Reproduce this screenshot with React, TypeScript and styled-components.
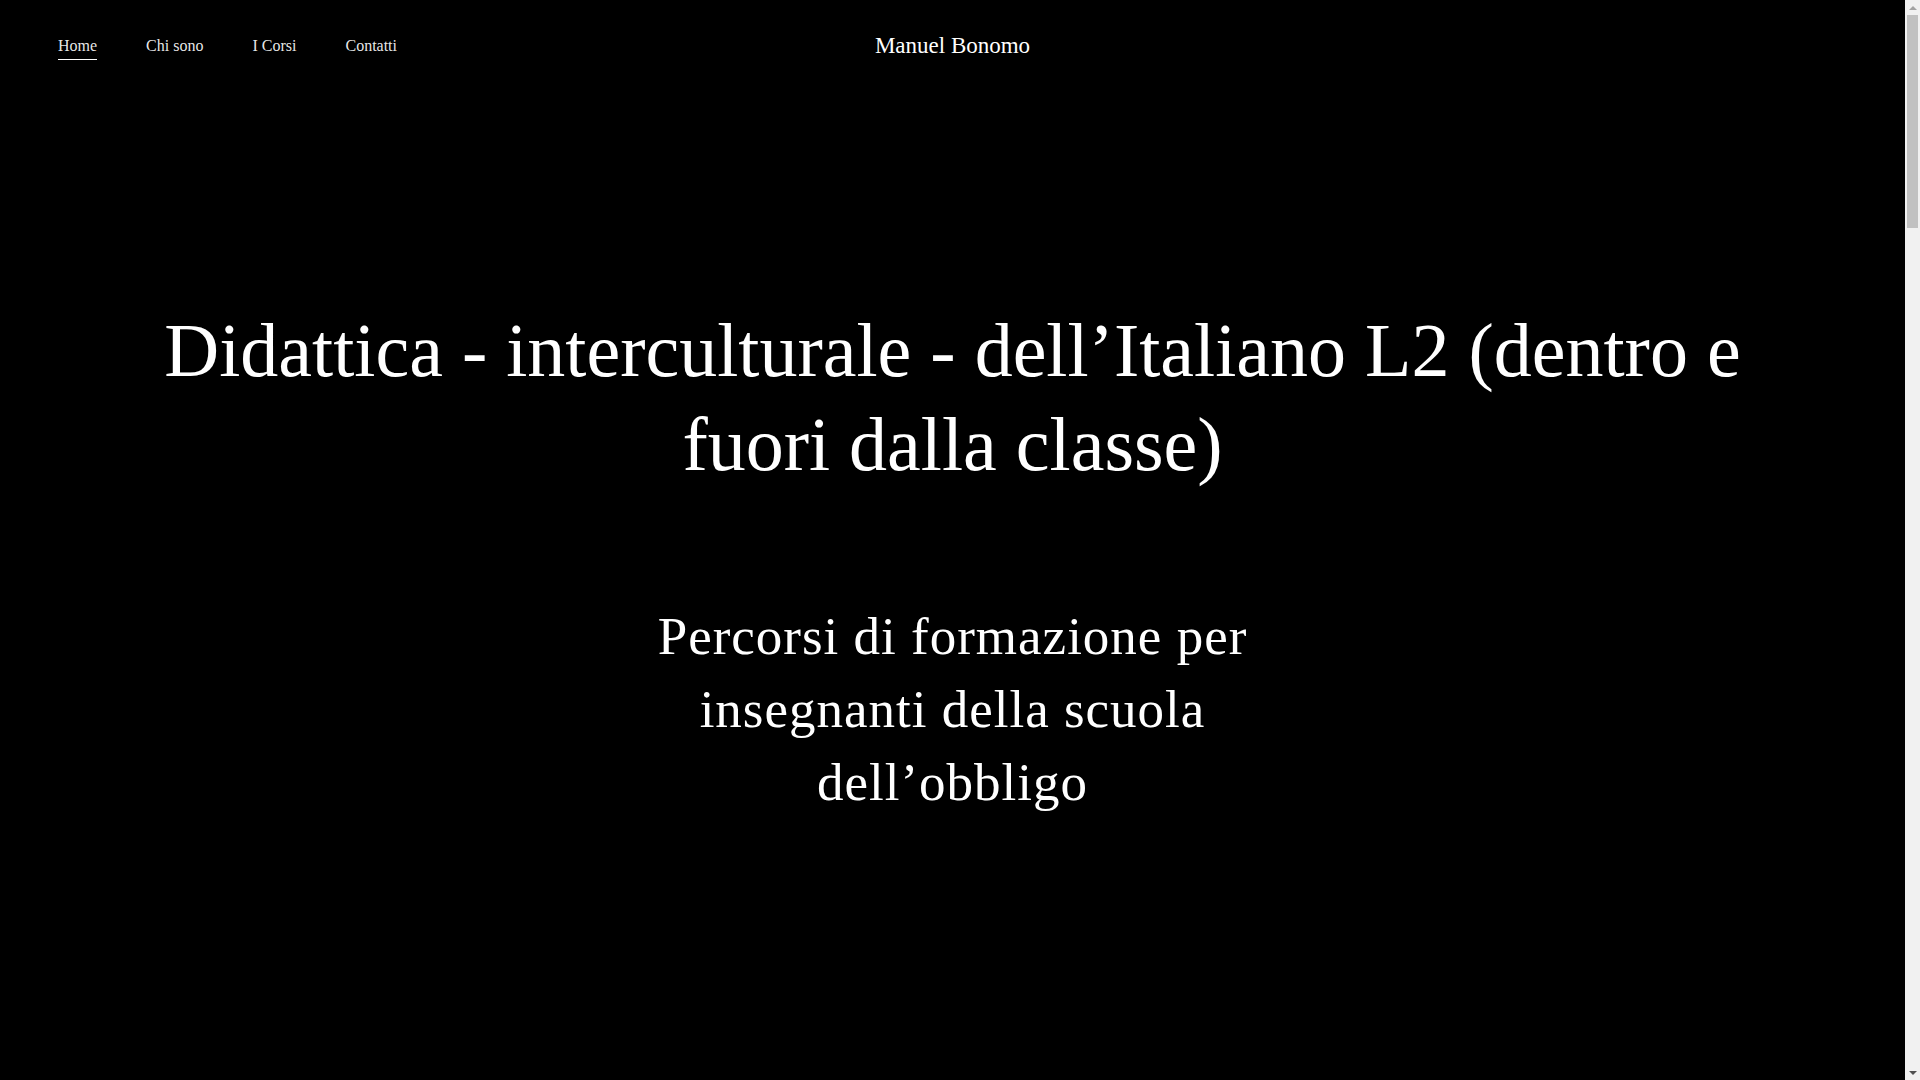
import styled, { createGlobalStyle } from 'styled-components';

const GlobalStyle = createGlobalStyle`
	html,
	body {
		margin: 0;
		padding: 0;
		height: 100%;
		overflow: hidden;
		background: #000;
	}

	body {
		font-family: 'Liberation Serif', 'Times New Roman', serif;
		color: #fff;
	}
`;

const Frame = styled.div`
	display: flex;
	height: 100vh;
	background: #000;
`;

const Content = styled.main`
	flex: 1;
	min-width: 0;
	overflow: hidden;
`;

// classic browser scrollbar drawn in flow, as seen in the reference
const ScrollBar = styled.div`
	display: flex;
	flex-direction: column;
	width: 15px;
	flex-shrink: 0;
	background: #f1f1f1;
`;

const ScrollButton = styled.div<{ $down?: boolean }>`
	display: flex;
	align-items: center;
	justify-content: center;
	height: 15px;

	&::before {
		content: '';
		width: 0;
		height: 0;
		border-left: 4px solid transparent;
		border-right: 4px solid transparent;
		${(p) =>
			p.$down
				? 'border-top: 4px solid #505050;'
				: 'border-bottom: 4px solid #a3a3a3;'}
	}
`;

const ScrollTrack = styled.div`
	flex: 1;
	display: flex;
	flex-direction: column;
	padding: 0 2px;
`;

const ScrollThumb = styled.div`
	height: 213px;
	background: #c1c1c1;
`;

const Page = styled.div`
	display: flex;
	flex-direction: column;
	min-height: 5320px;
`;

const Header = styled.header`
	display: grid;
	grid-template-columns: 1fr auto 1fr;
	align-items: center;
	height: 91px;
	padding: 0 58px;
`;

const Nav = styled.nav`
	display: flex;
	gap: 49px;
`;

const NavLink = styled.a<{ $active?: boolean }>`
	position: relative;
	font-size: 16px;
	color: rgba(255, 255, 255, 0.92);
	text-decoration: none;
	cursor: pointer;

	&::after {
		content: '';
		position: absolute;
		left: 0;
		right: 0;
		bottom: -5px;
		height: 1px;
		background: #fff;
		opacity: ${(p) => (p.$active ? 1 : 0)};
	}
`;

const Brand = styled.a`
	font-size: 23px;
	color: #fff;
	text-decoration: none;
	white-space: nowrap;
`;

const Hero = styled.section`
	display: flex;
	flex-direction: column;
	align-items: center;
	padding: 212px 100px 0;
	text-align: center;
`;

const Title = styled.h1`
	margin: 0;
	max-width: 1705px;
	font-size: 76px;
	font-weight: 400;
	line-height: 94px;
	color: #fff;
`;

const Subtitle = styled.h2`
	margin: 109px 0 0;
	max-width: 640px;
	font-size: 53px;
	font-weight: 400;
	line-height: 73px;
	letter-spacing: 1px;
	color: #fff;
`;

const links = ['Home', 'Chi sono', 'I Corsi', 'Contatti'];

export default function App() {
	return (
		<>
			<GlobalStyle />
			<Frame>
				<Content>
					<Page>
						<Header>
							<Nav>
								{links.map((l, i) => (
									<NavLink key={l} $active={i === 0}>
										{l}
									</NavLink>
								))}
							</Nav>
							<Brand>Manuel Bonomo</Brand>
							<div />
						</Header>

						<Hero>
							<Title>
								Didattica - interculturale - dell’Italiano L2 (dentro e fuori dalla classe)
							</Title>
							<Subtitle>
								Percorsi di formazione per insegnanti della scuola dell’obbligo
							</Subtitle>
						</Hero>
					</Page>
				</Content>

				<ScrollBar>
					<ScrollButton />
					<ScrollTrack>
						<ScrollThumb />
					</ScrollTrack>
					<ScrollButton $down />
				</ScrollBar>
			</Frame>
		</>
	);
}
